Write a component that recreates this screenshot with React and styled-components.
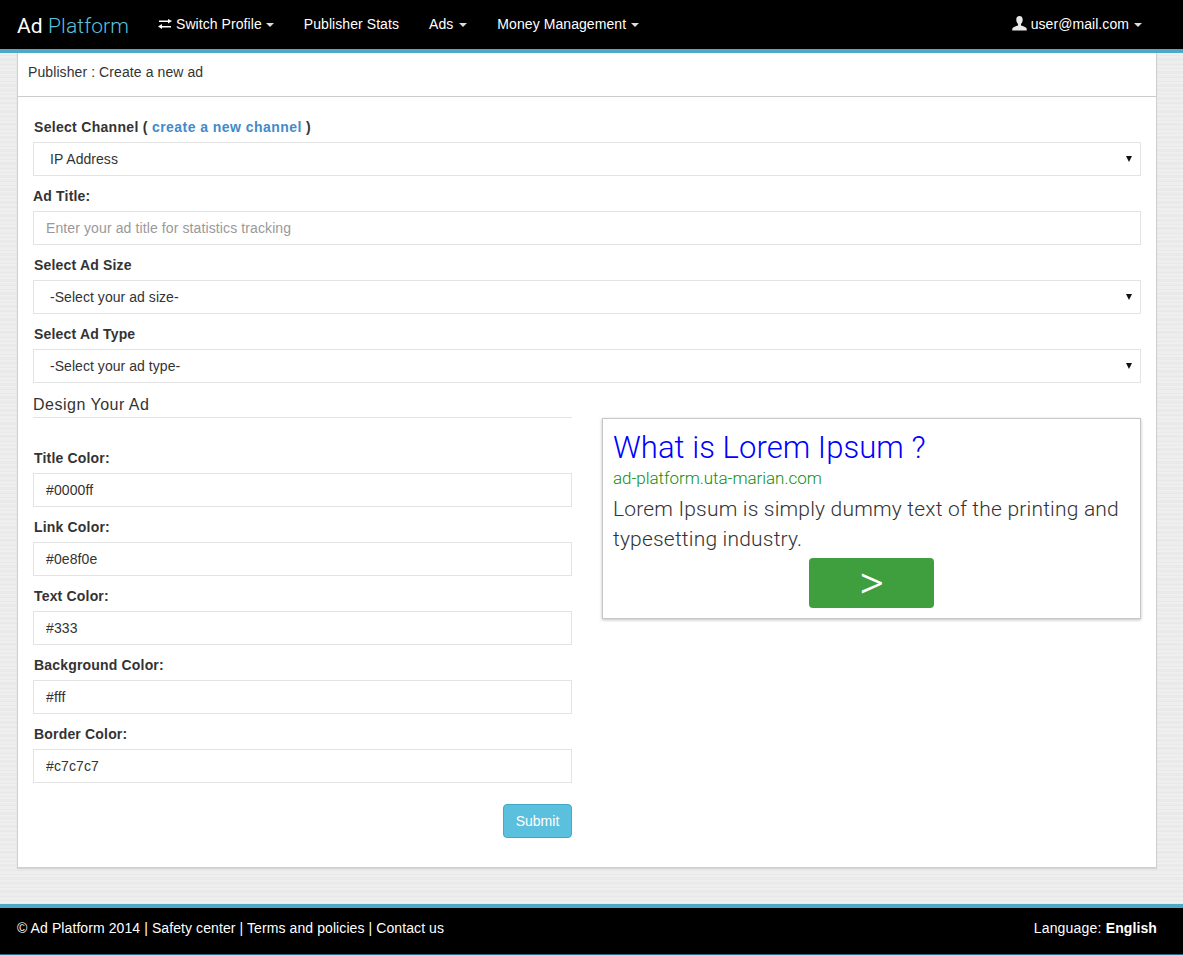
import React from "react";
import styled, { createGlobalStyle } from "styled-components";

const GlobalStyle = createGlobalStyle`
  * { box-sizing: border-box; }
  html, body { margin: 0; padding: 0; }
  body {
    font-family: "Liberation Sans", Arial, sans-serif;
    font-size: 14px;
    line-height: 20px;
    letter-spacing: 0.09px;
    color: #333;
    background-color: #ececec;
    background-image:
      repeating-linear-gradient(0deg, #efefef 0 2px, #e9e9e9 2px 3px, #eeeeee 3px 6px, #e7e7e7 6px 7px, #ececec 7px 9px, #f0f0f0 9px 10px, #e9e9e9 10px 13px);
  }
`;

const Page = styled.div`
  min-height: 955px;
  display: flex;
  flex-direction: column;
`;

const Navbar = styled.nav`
  height: 53px;
  background: #000;
  border-bottom: 4px solid #4fa9c6;
  display: flex;
  align-items: flex-start;
  padding-left: 17px;
  color: #fff;
  letter-spacing: 0.07px;
`;

const Brand = styled.a`
  font-family: Roboto, sans-serif;
  font-weight: 400;
  font-size: 21px;
  line-height: 52px;
  letter-spacing: 0.1px;
  width: 126px;
  color: #fff;
  span { color: #5bc0de; font-weight: 300; }
`;

const NavItem = styled.a`
  display: flex;
  align-items: center;
  gap: 4px;
  padding: 0 15px;
  line-height: 49px;
  color: #fff;
  white-space: nowrap;
`;

const Caret = styled.i`
  display: inline-block;
  margin-left: ${(p) => p.$offset ?? 1}px;
  width: 0;
  height: 0;
  border-top: 4px solid #ddd;
  border-left: 4px solid transparent;
  border-right: 4px solid transparent;
`;

const NavRight = styled.div`
  margin-left: auto;
  margin-right: 26px;
`;

const Card = styled.main`
  margin: 0 26px 36px 17px;
  height: 815px;
  background: #fff;
  border: 1px solid #d0d0d0;
  border-top: 0;
  box-shadow: 0 1px 1px rgba(0, 0, 0, 0.1);
`;

const CardHeader = styled.header`
  height: 44px;
  padding: 9px 10px;
  border-bottom: 1px solid #ccc;
  color: #333;
`;

const CardBody = styled.div`
  padding: 20px 15px 0;
`;

const Field = styled.div`
  margin-bottom: 10px;
`;

const Label = styled.label`
  display: block;
  height: 20px;
  font-weight: 700;
  letter-spacing: ${(p) => (p.$wide ? "0.3px" : "0.18px")};
  margin-bottom: 5px;
  line-height: 20px;
  padding-left: ${(p) => (p.$nudge ? "1px" : "0")};
  a { color: #428bca; letter-spacing: 0.45px; }
`;

const SelectWrap = styled.div`
  position: relative;
  &::after {
    content: "";
    position: absolute;
    top: 14px;
    right: 9px;
    border-top: 6px solid #111;
    border-left: 3px solid transparent;
    border-right: 3px solid transparent;
    pointer-events: none;
  }
`;

const Select = styled.select`
  display: block;
  width: 100%;
  height: 34px;
  padding: 0 12px;
  font: inherit;
  letter-spacing: 0.05px;
  color: #333;
  background: #fff;
  border: 1px solid #e3e3e3;
  border-radius: 0;
  appearance: none;
  text-indent: 4px;
`;

const Input = styled.input`
  display: block;
  width: 100%;
  height: 34px;
  padding: 0 12px;
  font: inherit;
  letter-spacing: 0.11px;
  color: #333;
  background: #fff;
  border: 1px solid #e3e3e3;
  border-radius: 0;
  &::placeholder { color: #999; opacity: 1; }
`;

const Columns = styled.div`
  display: grid;
  grid-template-columns: 1fr 1fr;
  column-gap: 30px;
`;

const DesignTitle = styled.h4`
  margin: 0 0 30px;
  height: 25px;
  font-size: 16px;
  font-weight: 400;
  line-height: 24px;
  letter-spacing: 0.5px;
  color: #333;
  border-bottom: 1px solid #e3e3e3;
`;

const SubmitRow = styled.div`
  display: flex;
  justify-content: flex-end;
  padding-top: 11px;
`;

const SubmitButton = styled.button`
  height: 34px;
  width: 69px;
  padding: 0;
  font: inherit;
  letter-spacing: 0;
  color: #fff;
  background: #5bc0de;
  border: 1px solid #46a8c4;
  border-radius: 4px;
`;

const AdPreview = styled.div`
  margin-top: 25px;
  height: 201px;
  padding: 10px;
  background: #fff;
  border: 1px solid #c7c7c7;
  box-shadow: 0 1px 3px rgba(0, 0, 0, 0.25);
  font-family: Roboto, sans-serif;
  font-weight: 300;
  letter-spacing: 0;
`;

const AdTitle = styled.div`
  font-size: 31px;
  line-height: 38px;
  letter-spacing: 0.05px;
  color: #0000ff;
`;

const AdLink = styled.div`
  font-size: 17px;
  line-height: 22px;
  letter-spacing: -0.04px;
  color: #0e8f0e;
`;

const AdText = styled.div`
  font-size: 21px;
  line-height: 30px;
  letter-spacing: 0.19px;
  margin-top: 5px;
  color: #333;
`;

const AdButton = styled.div`
  width: 125px;
  height: 50px;
  margin: 4px auto 0;
  background: #3f9f3f;
  border-radius: 4px;
  color: #fff;
  font-size: 48px;
  line-height: 50px;
  text-align: center;
`;

const Footer = styled.footer`
  margin-top: auto;
  height: 51px;
  background: #000;
  border-top: 4px solid #4fa9c6;
  border-bottom: 1px solid #2c6a85;
  display: flex;
  justify-content: space-between;
  padding: 10px 26px 0 17px;
  color: #fff;
  b { font-weight: 700; letter-spacing: 0.1px; }
`;

const Language = styled.span`
  letter-spacing: 0.2px;
`;

const TransferIcon = () => (
  <svg width="14" height="14" viewBox="0 0 14 14" fill="#fff">
    <path d="M10 1 L14 3 L10 5.5 V4 H1 V2.5 H10 Z" />
    <path d="M4 6 L0 8.5 L4 11 V9.5 H13 V8 H4 Z" />
  </svg>
);

const UserIconWrap = styled.span`
  display: flex;
  margin-top: -3px;
`;

const UserIcon = () => (
  <UserIconWrap>
    <svg width="15" height="15" viewBox="0 0 15 15" fill="#e8e8e8">
      <path d="M7.5 0 C5.3 0 4.3 1.6 4.3 3.8 C4.3 5.6 5 7 6 7.9 V9.4 C3.8 10.1 1 11 0.3 12.4 V14.5 H14.7 V12.4 C14 11 11.2 10.1 9 9.4 V7.9 C10 7 10.7 5.6 10.7 3.8 C10.7 1.6 9.7 0 7.5 0 Z" />
    </svg>
  </UserIconWrap>
);

const colorFields = [
  ["Title Color:", "#0000ff"],
  ["Link Color:", "#0e8f0e"],
  ["Text Color:", "#333"],
  ["Background Color:", "#fff"],
  ["Border Color:", "#c7c7c7"],
];

const App = () => {
  return (
    <Page>
      <GlobalStyle />
      <Navbar>
        <Brand>
          Ad <span>Platform</span>
        </Brand>
        <NavItem>
          <TransferIcon /> Switch Profile <Caret $offset={0} />
        </NavItem>
        <NavItem>Publisher Stats</NavItem>
        <NavItem>
          Ads <Caret $offset={2} />
        </NavItem>
        <NavItem>
          Money Management <Caret />
        </NavItem>
        <NavRight>
          <NavItem>
            <UserIcon /> user@mail.com <Caret />
          </NavItem>
        </NavRight>
      </Navbar>
      <Card>
        <CardHeader>Publisher : Create a new ad</CardHeader>
        <CardBody>
          <Field>
            <Label $nudge $wide>
              Select Channel ( <a>create a new channel</a> )
            </Label>
            <SelectWrap>
              <Select defaultValue="ip">
                <option value="ip">IP Address</option>
              </Select>
            </SelectWrap>
          </Field>
          <Field>
            <Label>Ad Title:</Label>
            <Input placeholder="Enter your ad title for statistics tracking" />
          </Field>
          <Field>
            <Label $nudge>Select Ad Size</Label>
            <SelectWrap>
              <Select>
                <option>-Select your ad size-</option>
              </Select>
            </SelectWrap>
          </Field>
          <Field>
            <Label $nudge>Select Ad Type</Label>
            <SelectWrap>
              <Select>
                <option>-Select your ad type-</option>
              </Select>
            </SelectWrap>
          </Field>
          <Columns>
            <div>
              <DesignTitle>Design Your Ad</DesignTitle>
              {colorFields.map(([label, value]) => (
                <Field key={label}>
                  <Label $nudge>{label}</Label>
                  <Input defaultValue={value} />
                </Field>
              ))}
              <SubmitRow>
                <SubmitButton>Submit</SubmitButton>
              </SubmitRow>
            </div>
            <div>
              <AdPreview>
                <AdTitle>What is Lorem Ipsum ?</AdTitle>
                <AdLink>ad-platform.uta-marian.com</AdLink>
                <AdText>
                  Lorem Ipsum is simply dummy text of the printing and
                  typesetting industry.
                </AdText>
                <AdButton>&gt;</AdButton>
              </AdPreview>
            </div>
          </Columns>
        </CardBody>
      </Card>
      <Footer>
        <span>© Ad Platform 2014 | Safety center | Terms and policies | Contact us</span>
        <Language>
          Language: <b>English</b>
        </Language>
      </Footer>
    </Page>
  );
};

export default App;
